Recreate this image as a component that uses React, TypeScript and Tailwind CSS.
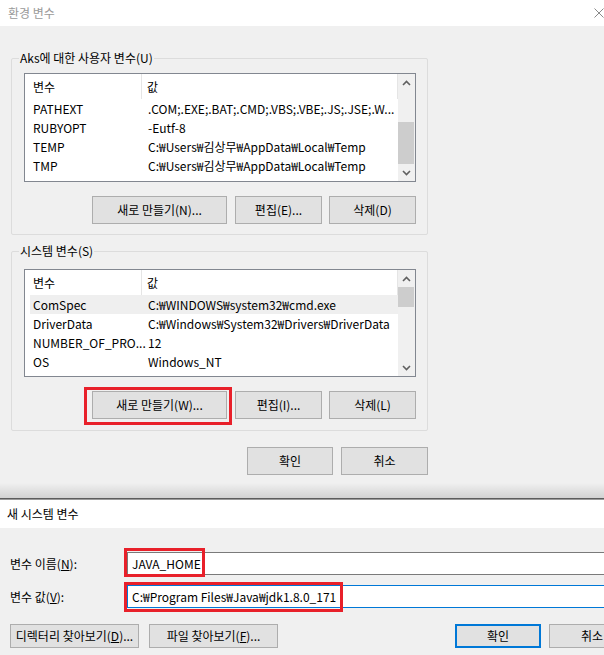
import React from "react";

type Row = { name: string; value: string };

const Up = () => (
  <svg width="9" height="6" viewBox="0 0 9 6">
    <path d="M1 5 L4.5 1.5 L8 5" fill="none" stroke="#606060" strokeWidth="1.6" />
  </svg>
);
const Down = () => (
  <svg width="9" height="6" viewBox="0 0 9 6">
    <path d="M1 1 L4.5 4.5 L8 1" fill="none" stroke="#606060" strokeWidth="1.6" />
  </svg>
);

function Btn({ children, className }: { children: React.ReactNode; className: string }) {
  return (
    <div
      className={
        "bg-[#e1e1e1] border border-[#adadad] flex items-center justify-center whitespace-nowrap " +
        className
      }
    >
      {children}
    </div>
  );
}

function ListBox({
  rows,
  heightClass,
  highlight,
  thumbClass,
}: {
  rows: Row[];
  heightClass: string;
  highlight: number;
  thumbClass: string;
}) {
  return (
    <div className={"w-[392px] border border-[#828790] bg-white flex " + heightClass}>
      <div className="flex-1 flex flex-col overflow-hidden">
        <div className="h-[25px] shrink-0 flex">
          <div className="w-[117px] border-r border-[#e5e5e5] pl-[8px] flex items-center">변수</div>
          <div className="flex-1 border-r border-[#e5e5e5] pl-[5px] flex items-center">값</div>
        </div>
        {rows.map((r, i) => (
          <div key={i} className="h-[19px] shrink-0 flex pl-[5px]">
            <div className={"flex-1 flex " + (i === highlight ? "bg-[#efefef]" : "")}>
              <div className="w-[112px] shrink-0 pl-[3px] flex items-center whitespace-nowrap">
                {r.name}
              </div>
              <div className="flex-1 pl-[6px] flex items-center whitespace-nowrap">
                {r.value}
              </div>
            </div>
          </div>
        ))}
      </div>
      <div className="w-[17px] shrink-0 bg-[#f0f0f0] flex flex-col">
        <div className="h-[17px] shrink-0 flex items-center justify-center">
          <Up />
        </div>
        <div className="flex-1 flex flex-col">
          <div className={"bg-[#cdcdcd] w-[16px] " + thumbClass} />
        </div>
        <div className="h-[17px] shrink-0 flex items-center justify-center">
          <Down />
        </div>
      </div>
    </div>
  );
}

const userRows: Row[] = [
  { name: "PATHEXT", value: ".COM;.EXE;.BAT;.CMD;.VBS;.VBE;.JS;.JSE;.W..." },
  { name: "RUBYOPT", value: "-Eutf-8" },
  { name: "TEMP", value: "C:₩Users₩김상무₩AppData₩Local₩Temp" },
  { name: "TMP", value: "C:₩Users₩김상무₩AppData₩Local₩Temp" },
];

const sysRows: Row[] = [
  { name: "ComSpec", value: "C:₩WINDOWS₩system32₩cmd.exe" },
  { name: "DriverData", value: "C:₩Windows₩System32₩Drivers₩DriverData" },
  { name: "NUMBER_OF_PRO...", value: "12" },
  { name: "OS", value: "Windows_NT" },
];

export default function App() {
  return (
    <div className="w-[604px] h-[655px] overflow-hidden relative bg-[#f0f0f0] text-[12px] leading-[16px] text-black font-['Noto_Sans_CJK_KR','Noto_Sans',sans-serif]">
      {/* Top window */}
      <div className="h-[498px] flex flex-col">
        <div className="h-[26px] shrink-0 bg-white flex items-center pl-[8px] text-[#9a9a9a]">
          <span>환경 변수</span>
          <svg className="ml-auto" width="10" height="10" viewBox="0 0 10 10">
            <path d="M0.5 0.5 L9.5 9.5 M9.5 0.5 L0.5 9.5" stroke="#8a8a8a" strokeWidth="1" />
          </svg>
        </div>
        <div className="flex-1 flex flex-col pl-[11px] pt-[24px]">
          <fieldset className="w-[417px] border border-[#dcdcdc] rounded-[2px]">
            <legend className="ml-[7px] px-[1px] leading-[16px]">Aks에 대한 사용자 변수(U)</legend>
            <div className="pl-[12px] pr-[11px] pt-[7px] pb-[10px] flex flex-col">
              <ListBox rows={userRows} heightClass="h-[109px]" highlight={-1} thumbClass="mt-[31px] h-[42px]" />
              <div className="mt-[14px] flex justify-end">
                <Btn className="w-[135px] h-[28px]">새로 만들기(N)...</Btn>
                <Btn className="ml-[8px] w-[87px] h-[28px]">편집(E)...</Btn>
                <Btn className="ml-[7px] w-[87px] h-[28px]">삭제(D)</Btn>
              </div>
            </div>
          </fieldset>
          <fieldset className="mt-[8px] w-[417px] border border-[#dcdcdc] rounded-[2px]">
            <legend className="ml-[7px] px-[1px] leading-[16px]">시스템 변수(S)</legend>
            <div className="pl-[12px] pr-[11px] pt-[10px] pb-[11px] flex flex-col">
              <ListBox rows={sysRows} heightClass="h-[108px]" highlight={0} thumbClass="h-[20px]" />
              <div className="mt-[14px] flex justify-end">
                <Btn className="w-[135px] h-[28px]">새로 만들기(W)...</Btn>
                <Btn className="ml-[8px] w-[87px] h-[28px]">편집(I)...</Btn>
                <Btn className="ml-[7px] w-[87px] h-[28px]">삭제(L)</Btn>
              </div>
            </div>
          </fieldset>
          <div className="mt-[16px] w-[417px] flex justify-end">
            <Btn className="w-[86px] h-[28px]">확인</Btn>
            <Btn className="ml-[8px] w-[87px] h-[28px]">취소</Btn>
          </div>
          <div className="flex-1" />
        </div>
        <div className="h-[15px] shrink-0 bg-gradient-to-b from-[#f0f0f0] to-[#d2d2d2]" />
      </div>
      <div className="h-[1px] bg-[#5c5c5c]" />
      <div className="h-[1px] bg-[#9a9a9a]" />

      {/* Bottom window */}
      <div className="h-[28px] bg-white flex items-center pl-[7px]">새 시스템 변수</div>
      <div className="pt-[24px] flex flex-col">
        <div className="flex items-center h-[23px]">
          <div className="w-[127px] shrink-0 pl-[10px] whitespace-nowrap">
            변수 이름(<span className="underline">N</span>):
          </div>
          <div className="w-[600px] shrink-0 h-[23px] border border-[#7a7a7a] bg-white flex items-center pl-[4px]">
            JAVA_HOME
          </div>
        </div>
        <div className="mt-[10px] flex items-center h-[23px]">
          <div className="w-[127px] shrink-0 pl-[10px] whitespace-nowrap">
            변수 값(<span className="underline">V</span>):
          </div>
          <div className="w-[600px] shrink-0 h-[23px] border border-[#0078d7] bg-white flex items-center pl-[4px] whitespace-nowrap">
            C:₩Program Files₩Java₩jdk1.8.0_171
          </div>
        </div>
        <div className="mt-[16px] flex pl-[10px]">
          <Btn className="w-[129px] h-[24px] shrink-0">
            <span>
              디렉터리 찾아보기(<span className="underline">D</span>)...
            </span>
          </Btn>
          <Btn className="ml-[10px] w-[129px] h-[24px] shrink-0">
            <span>
              파일 찾아보기(<span className="underline">F</span>)...
            </span>
          </Btn>
          <div className="ml-[177px] w-[86px] h-[24px] shrink-0 bg-[#e1e1e1] border-2 border-[#0078d7] flex items-center justify-center">
            확인
          </div>
          <Btn className="ml-[8px] w-[86px] h-[24px] shrink-0">취소</Btn>
        </div>
      </div>

      {/* Red annotation boxes */}
      <div className="absolute left-[84px] top-[387px] w-[148px] h-[38px] border-[3px] border-[#e8202a]" />
      <div className="absolute left-[124px] top-[548px] w-[81px] h-[29px] border-[3px] border-[#e8202a]" />
      <div className="absolute left-[124px] top-[582px] w-[219px] h-[30px] border-[3px] border-[#e8202a]" />
    </div>
  );
}
